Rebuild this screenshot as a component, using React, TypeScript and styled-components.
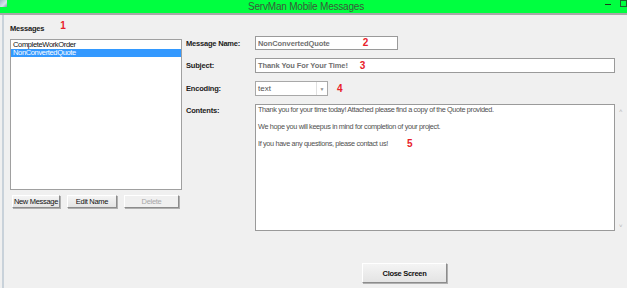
import React from "react";
import styled, { createGlobalStyle } from "styled-components";

const GlobalStyle = createGlobalStyle`
  html, body {
    margin: 0;
    padding: 0;
    background: #f0f0f0;
  }
  body {
    font-family: "Liberation Sans", Arial, sans-serif;
    font-size: 7px;
  }
`;

const Window = styled.div`
  width: 627px;
  height: 288px;
  overflow: hidden;
  background: #f0f0f0;
  display: flex;
  flex-direction: column;
`;

const TitleBar = styled.div`
  height: 13px;
  background: #00ff40;
  border-bottom: 2px solid #a8a8a8;
  display: flex;
  align-items: center;
`;

const TitleText = styled.div`
  flex: 1;
  text-align: center;
  font-size: 10px;
  color: #3a5a3a;
  letter-spacing: -0.2px;
  line-height: 13px;
`;

const AppIcon = styled.div`
  width: 7px;
  height: 7px;
  margin-top: -6px;
  background: linear-gradient(135deg, #9fb8c8 0%, #d8e4ea 60%, #7a98a8 100%);
`;

const TitleControls = styled.div`
  display: flex;
  align-items: flex-start;
  gap: 9px;
  align-self: flex-start;
  height: 13px;
`;

const MinGlyph = styled.div`
  width: 6px;
  height: 1px;
  margin-top: 4px;
  background: #1a3a1a;
`;

const MaxGlyph = styled.div`
  width: 5px;
  height: 5px;
  border: 1px solid #1f5f2f;
  border-top-width: 2px;
  margin-top: -1px;
`;

const Body = styled.div`
  flex: 1;
  display: flex;
  margin-left: 2px;
  border-left: 2px solid #c9d2da;
`;

const LeftPane = styled.div`
  width: 172px;
  padding: 2px 0 0 6px;
  display: flex;
  flex-direction: column;
`;

const SectionTitle = styled.div`
  font-weight: bold;
  font-size: 7.5px;
  letter-spacing: -0.2px;
  color: #202020;
  height: 22px;
  display: flex;
  align-items: center;
`;

const Marker = styled.span<{ $offset?: number }>`
  color: #e8202a;
  font-weight: bold;
  font-size: 10px;
  margin-left: ${(p) => p.$offset ?? 16}px;
  line-height: 1;
`;

const TitleMarker = styled(Marker)`
  margin-top: -5px;
`;

const ListBox = styled.div`
  height: 148px;
  background: #ffffff;
  border: 1px solid #a0a0a0;
  display: flex;
  flex-direction: column;
  padding-top: 1px;
`;

const ListItem = styled.div<{ $selected?: boolean }>`
  height: 8px;
  line-height: 8px;
  padding-left: 2px;
  font-size: 7.5px;
  letter-spacing: -0.35px;
  color: ${(p) => (p.$selected ? "#ffffff" : "#101010")};
  background: ${(p) => (p.$selected ? "#3399ff" : "transparent")};
`;

const ButtonRow = styled.div`
  display: flex;
  gap: 7px;
  margin-top: 5px;
  padding-left: 2px;
`;

const WinButton = styled.button<{ $w: number; $h?: number; $bold?: boolean }>`
  width: ${(p) => p.$w}px;
  height: ${(p) => p.$h ?? 13}px;
  padding: 0;
  font-family: "Liberation Sans", Arial, sans-serif;
  font-size: 7.5px;
  letter-spacing: -0.3px;
  font-weight: ${(p) => (p.$bold ? "bold" : "normal")};
  color: #101010;
  background: linear-gradient(#f4f4f4, #e4e4e4);
  border: 1px solid #ffffff;
  border-right-color: #8c8c8c;
  border-bottom-color: #8c8c8c;
  box-shadow: 1px 1px 0 #b0b0b0;
  &:disabled {
    color: #a8a8a8;
    background: #f0f0f0;
  }
`;

const RightPane = styled.div`
  flex: 1;
  padding: 21px 4px 0 4px;
  display: flex;
  flex-direction: column;
`;

const Form = styled.div`
  display: grid;
  grid-template-columns: 69px 1fr;
  row-gap: 8px;
  align-items: start;
`;

const Label = styled.div<{ $h: number }>`
  font-weight: bold;
  font-size: 7.5px;
  letter-spacing: -0.2px;
  color: #202020;
  height: ${(p) => p.$h}px;
  display: flex;
  align-items: center;
`;

const TopLabel = styled(Label)`
  align-items: flex-start;
  padding-top: 2px;
`;

const FieldLine = styled.div`
  display: flex;
  align-items: center;
`;

const TextBox = styled.div<{ $w: number; $h?: number }>`
  width: ${(p) => p.$w}px;
  height: ${(p) => p.$h ?? 14}px;
  box-sizing: border-box;
  background: #ffffff;
  border: 1px solid #9a9a9a;
  padding-left: 2px;
  display: flex;
  align-items: center;
  font-weight: bold;
  font-size: 7.5px;
  letter-spacing: -0.1px;
  color: #707070;
`;

const Select = styled.div`
  width: 73px;
  height: 15px;
  box-sizing: border-box;
  border: 1px solid #a8a8a8;
  background: #ffffff;
  display: flex;
  align-items: center;
  padding-left: 2px;
  font-size: 8px;
  color: #505050;
`;

const SelectText = styled.span`
  flex: 1;
`;

const DropArrow = styled.span`
  width: 10px;
  height: 13px;
  border-left: 1px solid #e0e0e0;
  display: flex;
  align-items: center;
  justify-content: center;
  font-size: 5px;
  color: #909090;
`;

const ContentWrap = styled.div`
  display: flex;
  gap: 4px;
`;

const TextArea = styled.div`
  width: 360px;
  height: 127px;
  box-sizing: border-box;
  background: #ffffff;
  border: 1px solid #9a9a9a;
  padding: 1px 2px;
  display: flex;
  flex-direction: column;
  gap: 9px;
  font-size: 7.3px;
  letter-spacing: -0.35px;
  color: #505050;
`;

const TextLine = styled.div`
  height: 8px;
  line-height: 8px;
  display: flex;
  align-items: center;
`;

const ScrollArrows = styled.div`
  display: flex;
  flex-direction: column;
  justify-content: space-between;
  height: 127px;
  padding: 4px 0 2px;
  box-sizing: border-box;
  font-size: 6px;
  color: #b0b0b0;
`;

const Footer = styled.div`
  display: flex;
  justify-content: center;
  margin-top: 30px;
`;

export default function App() {
  return (
    <>
      <GlobalStyle />
      <Window>
        <TitleBar>
          <AppIcon />
          <TitleText>ServMan Mobile Messages</TitleText>
          <TitleControls>
            <MinGlyph />
            <MaxGlyph />
          </TitleControls>
        </TitleBar>
        <Body>
          <LeftPane>
            <SectionTitle>
              Messages
              <TitleMarker $offset={16}>1</TitleMarker>
            </SectionTitle>
            <ListBox>
              <ListItem>CompleteWorkOrder</ListItem>
              <ListItem $selected>NonConvertedQuote</ListItem>
            </ListBox>
            <ButtonRow>
              <WinButton $w={48}>New Message</WinButton>
              <WinButton $w={50}>Edit Name</WinButton>
              <WinButton $w={55} disabled>
                Delete
              </WinButton>
            </ButtonRow>
          </LeftPane>
          <RightPane>
            <Form>
              <Label $h={14}>Message Name:</Label>
              <FieldLine>
                <TextBox $w={143}>
                  NonConvertedQuote
                  <Marker $offset={33}>2</Marker>
                </TextBox>
              </FieldLine>

              <Label $h={15}>Subject:</Label>
              <FieldLine>
                <TextBox $w={360} $h={15}>
                  Thank You For Your Time!
                  <Marker $offset={12}>3</Marker>
                </TextBox>
              </FieldLine>

              <Label $h={15}>Encoding:</Label>
              <FieldLine>
                <Select>
                  <SelectText>text</SelectText>
                  <DropArrow>▼</DropArrow>
                </Select>
                <Marker $offset={9}>4</Marker>
              </FieldLine>

              <TopLabel $h={127}>Contents:</TopLabel>
              <ContentWrap>
                <TextArea>
                  <TextLine>
                    Thank you for your time today! Attached please find a copy of the Quote provided.
                  </TextLine>
                  <TextLine>We hope you will keepus in mind for completion of your project.</TextLine>
                  <TextLine>
                    If you have any questions, please contact us!
                    <Marker $offset={19}>5</Marker>
                  </TextLine>
                </TextArea>
                <ScrollArrows>
                  <span>˄</span>
                  <span>˅</span>
                </ScrollArrows>
              </ContentWrap>
            </Form>
            <Footer>
              <WinButton $w={85} $h={20} $bold>
                Close Screen
              </WinButton>
            </Footer>
          </RightPane>
        </Body>
      </Window>
    </>
  );
}
